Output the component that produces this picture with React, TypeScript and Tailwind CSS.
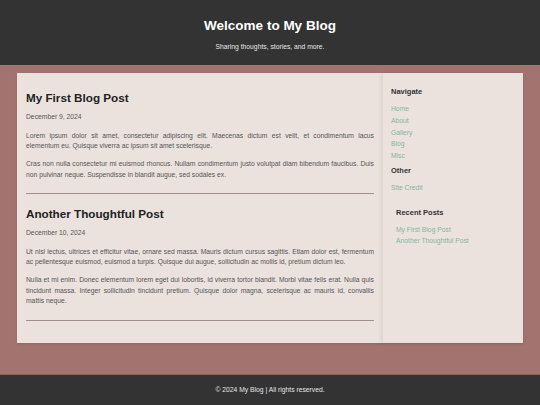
import React from 'react';

const navLinks = ['Home', 'About', 'Gallery', 'Blog', 'Misc'];

const posts = [
  {
    title: 'My First Blog Post',
    date: 'December 9, 2024',
    paragraphs: [
      'Lorem ipsum dolor sit amet, consectetur adipiscing elit. Maecenas dictum est velit, et condimentum lacus elementum eu. Quisque viverra ac ipsum sit amet scelerisque.',
      'Cras non nulla consectetur mi euismod rhoncus. Nullam condimentum justo volutpat diam bibendum faucibus. Duis non pulvinar neque. Suspendisse in blandit augue, sed sodales ex.',
    ],
  },
  {
    title: 'Another Thoughtful Post',
    date: 'December 10, 2024',
    paragraphs: [
      'Ut nisl lectus, ultrices et efficitur vitae, ornare sed massa. Mauris dictum cursus sagittis. Etiam dolor est, fermentum ac pellentesque euismod, euismod a turpis. Quisque dui augue, sollicitudin ac mollis id, pretium dictum leo.',
      'Nulla et mi enim. Donec elementum lorem eget dui lobortis, id viverra tortor blandit. Morbi vitae felis erat. Nulla quis tincidunt massa. Integer sollicitudin tincidunt pretium. Quisque dolor magna, scelerisque ac mauris id, convallis mattis neque.',
    ],
  },
];

const App: React.FC = () => {
  return (
    <div className="min-h-[405px] flex flex-col bg-[#a37370] text-[6.75px] font-['Liberation_Sans',Arial,sans-serif]">
      {/* Header */}
      <header className="h-[65px] bg-[#333333] flex flex-col items-center pt-[18px] text-white">
        <h1 className="text-[13.5px] leading-[16px] font-bold">Welcome to My Blog</h1>
        <p className="mt-[9px] text-[6.75px] leading-[8px] text-[#e6e6e6]">Sharing thoughts, stories, and more.</p>
      </header>

      {/* Content */}
      <div className="flex-1 px-[17px] pt-[8px] pb-[32px]">
        <div className="flex bg-[#ebe2de] h-[270px] shadow-[0_1px_3px_rgba(0,0,0,0.1)]">
          <main className="flex-1 px-[9px] pt-[17px]">
            {posts.map((post) => (
              <article key={post.title} className="border-b border-[#a08c8c] pb-[13px] mb-[12px]">
                <h2 className="text-[11.7px] leading-[15px] font-bold text-[#222222]">{post.title}</h2>
                <div className="mt-[6px] leading-[11px] text-[#555555]">{post.date}</div>
                <div className="mt-[8.5px] flex flex-col gap-[7.5px]">
                  {post.paragraphs.map((p, i) => (
                    <p key={i} className="leading-[10.5px] text-justify text-[#555555]">{p}</p>
                  ))}
                </div>
              </article>
            ))}
          </main>

          <aside className="w-[140px] px-[8px] pt-[14px] shadow-[-2px_0_4px_rgba(0,0,0,0.07)]">
            <h3 className="text-[7.5px] leading-[10px] font-bold text-[#333333]">Navigate</h3>
            <ul className="mt-[6px]">
              {navLinks.map((l) => (
                <li key={l} className="leading-[11.75px] text-[#86b59c]">{l}</li>
              ))}
            </ul>
            <h3 className="mt-[4px] text-[7.5px] leading-[10px] font-bold text-[#333333]">Other</h3>
            <ul className="mt-[6px]">
              <li className="leading-[11.75px] text-[#86b59c]">Site Credit</li>
            </ul>

            <div className="mt-[14px] pl-[5px]">
              <h3 className="text-[7.5px] leading-[10px] font-bold text-[#333333]">Recent Posts</h3>
              <ul className="mt-[6px]">
                {posts.map((p) => (
                  <li key={p.title} className="leading-[11.75px] text-[#86b59c]">{p.title}</li>
                ))}
              </ul>
            </div>
          </aside>
        </div>
      </div>

      {/* Footer */}
      <footer className="h-[30px] bg-[#333333] flex items-center justify-center text-[#e6e6e6] shadow-[0_-1px_0_rgba(0,0,0,0.15)]">
        © 2024 My Blog | All rights reserved.
      </footer>
    </div>
  );
};

export default App;
